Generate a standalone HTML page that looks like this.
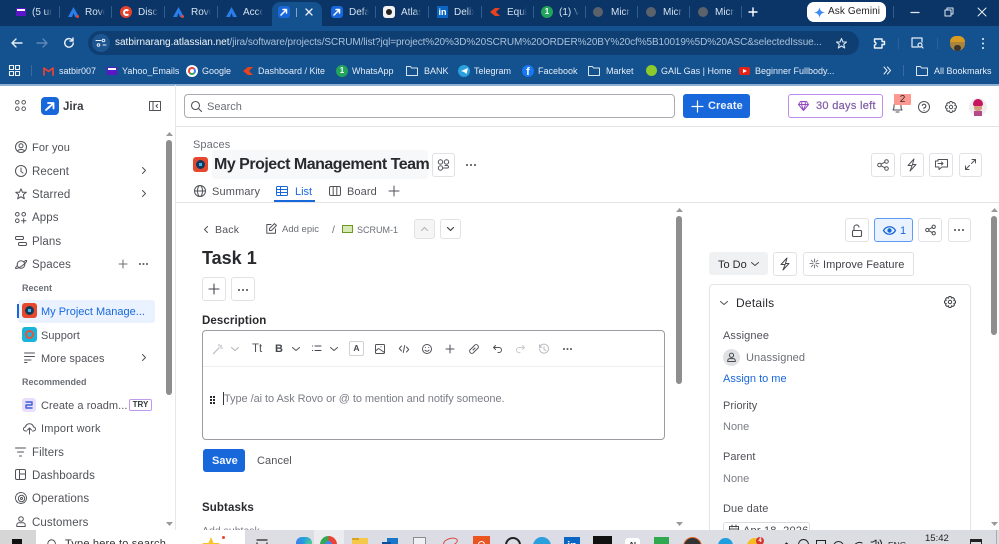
<!DOCTYPE html>
<html><head><meta charset="utf-8"><title>Jira</title>
<style>
html,body{margin:0;padding:0;width:999px;height:544px;overflow:hidden;background:#fff}
body{position:relative;font-family:"Liberation Sans",sans-serif;color:#505258}
.t{position:absolute;white-space:nowrap;line-height:16px;height:16px;margin-top:1px}
.a{position:absolute}
svg{position:absolute;overflow:visible;fill:none;stroke:currentColor;stroke-width:1.3;stroke-linecap:round;stroke-linejoin:round}
.tab{color:#d5e2f0;font-size:10px;width:20px;overflow:hidden;margin-top:0;-webkit-mask-image:linear-gradient(90deg,#000 65%,transparent);mask-image:linear-gradient(90deg,#000 65%,transparent)}
.sep{position:absolute;top:6px;width:1px;height:12px;background:#2d5f94}
.bm{color:#e6eef7;font-size:9px;top:62px}
.nav{font-size:11.5px;letter-spacing:.1px}
.sub{font-size:11px;letter-spacing:.05px}
.btn{position:absolute;box-sizing:border-box;border:1px solid #e0e2e6;border-radius:3px;background:#fff}
.lbl{font-size:11px;color:#505258}
</style></head><body>

<!-- browser chrome -->
<div class="a" style="left:0;top:0;width:999px;height:26px;background:#0b3566"></div>
<div class="a" style="left:0;top:26px;width:999px;height:58px;background:#13518f"></div>
<div class="a" style="left:272px;top:2px;width:50px;height:26px;background:#13518f;border-radius:8px 8px 0 0"></div>

<div class="a" style="left:16px;top:8px;width:10px;height:8px;background:#5b16c8"></div>
<div class="a" style="left:17px;top:9px;width:8px;height:2px;background:#fff"></div>
<div class="t tab" style="left:32px;top:5px">(5 ur</div><div class="sep" style="left:59px"></div>
<svg style="left:68px;top:7px" width="11" height="11" viewBox="0 0 11 11"><path d="M5.5 0L11 10H7L5.5 6L4 10H0Z" fill="#2b7de9" stroke="none"/><circle cx="9.5" cy="9.5" r="1.5" fill="#e5482d" stroke="none"/></svg>
<div class="t tab" style="left:85px;top:5px">Rovo</div><div class="sep" style="left:111px"></div>
<div class="a" style="left:120px;top:6px;width:12px;height:12px;border-radius:50%;background:#e5432d"></div>
<div class="a" style="left:123px;top:9px;width:3px;height:3px;border:2px solid #fff;border-right-color:transparent;border-radius:50%"></div>
<div class="t tab" style="left:138px;top:5px">Disco</div><div class="sep" style="left:164px"></div>
<svg style="left:173px;top:7px" width="11" height="11" viewBox="0 0 11 11"><path d="M5.5 0L11 10H7L5.5 6L4 10H0Z" fill="#2b7de9" stroke="none"/><circle cx="9.5" cy="9.5" r="1.5" fill="#e5482d" stroke="none"/></svg>
<div class="t tab" style="left:191px;top:5px">Rovo</div><div class="sep" style="left:217px"></div>
<svg style="left:226px;top:7px" width="11" height="11" viewBox="0 0 11 11"><path d="M5.5 0L11 10H7L5.5 6L4 10H0Z" fill="#2b7de9" stroke="none"/></svg>
<div class="t tab" style="left:243px;top:5px">Acce</div>

<div class="a" style="left:278px;top:6px;width:12px;height:12px;border-radius:3px;background:#1868db"></div>
<svg style="left:280px;top:8px;color:#fff" width="8" height="8" viewBox="0 0 8 8"><path d="M1 7L4 4M3 5L6 2M3 1.5H6.5V5" stroke-width="1.5"/></svg>
<div class="a" style="left:296px;top:8px;width:1px;height:9px;background:#7fa5cf"></div>
<svg style="left:306px;top:9px;color:#e8f0fa" width="6" height="6" viewBox="0 0 6 6"><path d="M0 0L6 6M6 0L0 6"/></svg>

<div class="a" style="left:331px;top:6px;width:12px;height:12px;border-radius:3px;background:#1868db"></div>
<svg style="left:333px;top:8px;color:#fff" width="8" height="8" viewBox="0 0 8 8"><path d="M1 7L4 4M3 5L6 2M3 1.5H6.5V5" stroke-width="1.5"/></svg>
<div class="t tab" style="left:349px;top:5px">Defa</div><div class="sep" style="left:375px"></div>
<div class="a" style="left:383px;top:6px;width:12px;height:12px;border-radius:3px;background:#f3f3f3"></div>
<div class="a" style="left:386px;top:9px;width:6px;height:6px;border-radius:50%;border:0;background:#222"></div>
<div class="t tab" style="left:401px;top:5px">Atlas</div><div class="sep" style="left:428px"></div>
<div class="a" style="left:437px;top:6px;width:11px;height:12px;background:#0a66c2;color:#fff;font:bold 9px/12px 'Liberation Sans',sans-serif;text-align:center">in</div>
<div class="t tab" style="left:454px;top:5px">Delix</div><div class="sep" style="left:481px"></div>
<svg style="left:490px;top:8px" width="10" height="8" viewBox="0 0 10 8"><path d="M5 0L0 4L5 8H10L6 4L10 0Z" fill="#e8421f" stroke="none"/></svg>
<div class="t tab" style="left:507px;top:5px">Equi</div><div class="sep" style="left:533px"></div>
<div class="a" style="left:541px;top:6px;width:12px;height:12px;border-radius:50%;background:#22a55b;color:#fff;font:bold 8px/12px 'Liberation Sans',sans-serif;text-align:center">1</div>
<div class="t tab" style="left:559px;top:5px">(1) V</div><div class="sep" style="left:585px"></div>
<div class="a" style="left:593px;top:7px;width:10px;height:10px;border-radius:50%;background:#5b626b"></div>
<div class="t tab" style="left:611px;top:5px">Micr</div><div class="sep" style="left:637px"></div>
<div class="a" style="left:646px;top:7px;width:10px;height:10px;border-radius:50%;background:#5b626b"></div>
<div class="t tab" style="left:663px;top:5px">Micr</div><div class="sep" style="left:689px"></div>
<div class="a" style="left:698px;top:7px;width:10px;height:10px;border-radius:50%;background:#5b626b"></div>
<div class="t tab" style="left:715px;top:5px">Micr</div><div class="sep" style="left:741px"></div>
<svg style="left:749px;top:8px;color:#fff" width="8" height="8" viewBox="0 0 8 8"><path d="M4 0V8M0 4H8" stroke-width="1.4"/></svg>

<div class="a" style="left:807px;top:2px;width:79px;height:20px;background:#fff;border-radius:7px"></div>
<svg style="left:814px;top:7px" width="11" height="11" viewBox="0 0 11 11"><path d="M5.5 0C6 3.5 7.500 5 11 5.500C7.500 6 6 7.500 5.500 11C5 7.500 3.500 6 0 5.500C3.500 5 5 3.500 5.500 0Z" fill="#3f8cf0" stroke="none"/></svg>
<div class="t" style="left:828px;top:3px;font-size:10px;color:#1f2023;letter-spacing:.1px">Ask Gemini</div>
<div class="sep" style="left:893px"></div>
<svg style="left:911px;top:12px;color:#dfe8f3" width="8" height="1" viewBox="0 0 8 1"><path d="M0 .5H8"/></svg>
<svg style="left:945px;top:8px;color:#dfe8f3" width="8" height="8" viewBox="0 0 8 8"><path d="M0 2H6V8H0ZM2 2V0H8V6H6" stroke-width="1"/></svg>
<svg style="left:978px;top:8px;color:#e8eef6" width="8" height="8" viewBox="0 0 8 8"><path d="M0 0L8 8M8 0L0 8" stroke-width="1"/></svg>

<!-- toolbar -->
<svg style="left:11px;top:38px;color:#e6eef7" width="11" height="10" viewBox="0 0 11 10"><path d="M11 5H1M5 1L1 5L5 9" stroke-width="1.4"/></svg>
<svg style="left:37px;top:38px;color:#5e87b5" width="11" height="10" viewBox="0 0 11 10"><path d="M0 5H10M6 1L10 5L6 9" stroke-width="1.4"/></svg>
<svg style="left:64px;top:38px;color:#e6eef7" width="10" height="10" viewBox="0 0 10 10"><path d="M9.300 5A4.300 4.300 0 1 1 8 1.800M9 0V3H6" stroke-width="1.4"/></svg>
<div class="a" style="left:88px;top:31px;width:771px;height:24px;border-radius:12px;background:#0f3f72"></div>
<div class="a" style="left:92px;top:34px;width:18px;height:18px;border-radius:50%;background:#1c558f"></div>
<svg style="left:96px;top:39px;color:#e6eef7" width="10" height="8" viewBox="0 0 10 8"><path d="M0 1.500H5M7 6H10" stroke-width="1"/><circle cx="7.500" cy="1.500" r="1.300" stroke-width="1"/><circle cx="2.500" cy="6" r="1.300" stroke-width="1"/></svg>
<div class="t" style="left:115px;top:34px;font-size:10px;color:#a9c0da;width:715px;overflow:hidden"><span style="color:#f3f7fb">satbirnarang.atlassian.net</span><span style="letter-spacing:-.1px">/jira/software/projects/SCRUM/list?jql=project%20%3D%20SCRUM%20ORDER%20BY%20cf%5B10019%5D%20ASC&amp;selectedIssue...</span></div>
<svg style="left:836px;top:38px;color:#d8e4f1" width="11" height="11" viewBox="0 0 11 11"><path d="M5.500 .5L7 4H10.500L7.700 6.300L8.700 10L5.500 8L2.300 10L3.300 6.300L.5 4H4Z" stroke-width="1.1"/></svg>
<svg style="left:873px;top:37px;color:#eef3f9" width="12" height="12" viewBox="0 0 12 12"><path d="M3 2H9V4.500H11.500V7.500H9V11H1.500V8A1.500 1.500 0 0 0 1.500 5V2Z" stroke-width="1.4"/></svg>
<div class="a" style="left:898px;top:38px;width:1px;height:11px;background:#2d6198"></div>
<svg style="left:911px;top:37px;color:#e6eef7" width="13" height="12" viewBox="0 0 13 12"><path d="M7 10H1V1H11V5" stroke-width="1.2"/><circle cx="9" cy="8" r="2" stroke-width="1.2"/><path d="M10.500 9.500L12 11" stroke-width="1.2"/></svg>
<div class="a" style="left:937px;top:38px;width:1px;height:11px;background:#2d6198"></div>
<div class="a" style="left:950px;top:36px;width:15px;height:15px;border-radius:50%;background:#a9843c"></div>
<div class="a" style="left:950px;top:36px;width:15px;height:6px;border-radius:8px 8px 0 0;background:#d89b22"></div>
<div class="a" style="left:954px;top:45px;width:7px;height:6px;border-radius:3px;background:#3c342c"></div>
<div class="a" style="left:982px;top:38px;width:2px;height:2px;border-radius:1px;background:#f0f4f9;box-shadow:0 4.500px 0 #f0f4f9,0 9px 0 #f0f4f9"></div>

<!-- bookmarks -->
<svg style="left:9px;top:65px;color:#eef3f9" width="11" height="11" viewBox="0 0 11 11"><path d="M.5 .5H4.500V4.500H.5ZM6.500 .5H10.500V4.500H6.500ZM.5 6.500H4.500V10.500H.5ZM6.500 6.500H10.500V10.500H6.500Z" stroke-width="1.1"/></svg>
<div class="a" style="left:31px;top:65px;width:1px;height:11px;background:#3a6a9e"></div>
<svg style="left:43px;top:67px" width="11" height="8" viewBox="0 0 11 8"><path d="M1 8V1L5.500 4.500L10 1V8" stroke="#e84335" stroke-width="1.700"/></svg>
<div class="t bm" style="left:59px">satbir007</div>
<div class="a" style="left:107px;top:67px;width:10px;height:8px;background:#5b16c8"></div><div class="a" style="left:108px;top:68px;width:8px;height:2px;background:#fff"></div>
<div class="t bm" style="left:122px">Yahoo_Emails</div>
<div class="a" style="left:186px;top:65px;width:12px;height:12px;border-radius:50%;background:#fff"></div>
<div class="a" style="left:188px;top:67px;width:4px;height:4px;border-radius:50%;border:2px solid #4285f4;border-left-color:#ea4335;border-bottom-color:#34a853;border-top-color:#ea4335"></div>
<div class="t bm" style="left:202px">Google</div>
<svg style="left:243px;top:67px" width="10" height="8" viewBox="0 0 10 8"><path d="M5 0L0 4L5 8H10L6 4L10 0Z" fill="#e8421f" stroke="none"/></svg>
<div class="t bm" style="left:258px">Dashboard / Kite</div>
<div class="a" style="left:336px;top:65px;width:12px;height:12px;border-radius:50%;background:#22a55b;color:#fff;font:bold 8px/12px 'Liberation Sans',sans-serif;text-align:center">1</div>
<div class="t bm" style="left:352px">WhatsApp</div>
<svg style="left:406px;top:66px;color:#d9e4f0" width="12" height="10" viewBox="0 0 12 10"><path d="M.5 9.500V.5H4.500L5.500 2H11.500V9.500Z" stroke-width="1"/></svg>
<div class="t bm" style="left:424px">BANK</div>
<div class="a" style="left:458px;top:65px;width:12px;height:12px;border-radius:50%;background:#2aa0dc"></div>
<svg style="left:461px;top:68px" width="7" height="6" viewBox="0 0 7 6"><path d="M0 3L7 0L5.500 6L3 4Z" fill="#fff" stroke="none"/></svg>
<div class="t bm" style="left:474px">Telegram</div>
<div class="a" style="left:522px;top:65px;width:12px;height:12px;border-radius:50%;background:#1877f2;color:#fff;font:bold 11px/14px 'Liberation Sans',sans-serif;text-align:center">f</div>
<div class="t bm" style="left:538px">Facebook</div>
<svg style="left:588px;top:66px;color:#d9e4f0" width="12" height="10" viewBox="0 0 12 10"><path d="M.5 9.500V.5H4.500L5.500 2H11.500V9.500Z" stroke-width="1"/></svg>
<div class="t bm" style="left:606px">Market</div>
<div class="a" style="left:646px;top:65px;width:11px;height:11px;border-radius:50%;background:#8ccb2b"></div>
<div class="t bm" style="left:661px">GAIL Gas | Home</div>
<div class="a" style="left:739px;top:67px;width:11px;height:8px;border-radius:2px;background:#e62117"></div>
<svg style="left:743px;top:69px" width="4" height="4" viewBox="0 0 4 4"><path d="M0 0L4 2L0 4Z" fill="#fff" stroke="none"/></svg>
<div class="t bm" style="left:755px">Beginner Fullbody...</div>
<svg style="left:883px;top:67px;color:#e6eef7" width="8" height="7" viewBox="0 0 8 7"><path d="M1 0L4 3.500L1 7M4.500 0L7.500 3.500L4.500 7" stroke-width="1"/></svg>
<div class="a" style="left:903px;top:65px;width:1px;height:11px;background:#3a6a9e"></div>
<svg style="left:916px;top:66px;color:#d9e4f0" width="12" height="10" viewBox="0 0 12 10"><path d="M.5 9.500V.5H4.500L5.500 2H11.500V9.500Z" stroke-width="1"/></svg>
<div class="t bm" style="left:934px">All Bookmarks</div>

<div class="a" style="left:0;top:84px;width:999px;height:1.500px;background:#8eaed2"></div>

<!-- dividers -->
<div class="a" style="left:175px;top:85px;width:1px;height:445px;background:#e6e7ea"></div>
<div class="a" style="left:176px;top:126px;width:823px;height:1px;background:#e3e4e7"></div>
<div class="a" style="left:176px;top:202px;width:823px;height:1px;background:#e3e4e7"></div>

<!-- sidebar header -->
<svg style="left:15px;top:100px;color:#5b5d62" width="11" height="11" viewBox="0 0 11 11"><circle cx="2.300" cy="2.300" r="1.800" stroke-width="1"/><circle cx="8.700" cy="2.300" r="1.800" stroke-width="1"/><circle cx="2.300" cy="8.700" r="1.800" stroke-width="1"/><circle cx="8.700" cy="8.700" r="1.800" stroke-width="1"/></svg>
<div class="a" style="left:41px;top:97px;width:18px;height:18px;border-radius:4px;background:#1868db"></div>
<svg style="left:45px;top:101px;color:#fff" width="10" height="10" viewBox="0 0 10 10"><path d="M1 9L4.500 5.500M3.500 7L7 3.500M3 2H8.500V7.500" stroke-width="1.800"/></svg>
<div class="t" style="left:63px;top:98px;font-size:11.500px;font-weight:bold;color:#3a3d42">Jira</div>
<svg style="left:149px;top:101px;color:#505258" width="12" height="10" viewBox="0 0 12 10"><path d="M.5 .5H11.500V9.500H.5ZM4 .5V9.500M8.500 3.500L7 5L8.500 6.500" stroke-width="1"/></svg>

<!-- sidebar scrollbar -->
<div class="a" style="left:166px;top:140px;width:6px;height:255px;border-radius:3px;background:#8e8e8e"></div>
<svg style="left:166px;top:132px" width="7" height="4" viewBox="0 0 7 4"><path d="M3.500 0L7 4H0Z" fill="#9a9a9a" stroke="none"/></svg>
<svg style="left:166px;top:522px" width="7" height="4" viewBox="0 0 7 4"><path d="M0 0H7L3.500 4Z" fill="#9a9a9a" stroke="none"/></svg>

<!-- sidebar nav -->
<svg style="left:15px;top:141px;color:#505258" width="12" height="12" viewBox="0 0 12 12"><circle cx="6" cy="6" r="5.500" stroke-width="1"/><circle cx="6" cy="4.800" r="2" stroke-width="1"/><path d="M2.500 10C3.500 8 8.500 8 9.500 10" stroke-width="1"/></svg>
<div class="t nav" style="left:32px;top:139px;font-size:11px">For you</div>
<svg style="left:15px;top:165px;color:#505258" width="12" height="12" viewBox="0 0 12 12"><circle cx="6" cy="6" r="5.500" stroke-width="1"/><path d="M6 3V6.500L8 8" stroke-width="1"/></svg>
<div class="t nav" style="left:32px;top:163px">Recent</div>
<svg style="left:142px;top:167px;color:#505258" width="4" height="7" viewBox="0 0 4 7"><path d="M.5 .5L3.500 3.500L.5 6.500" stroke-width="1"/></svg>
<svg style="left:15px;top:188px;color:#505258" width="12" height="12" viewBox="0 0 12 12"><path d="M6 .8L7.500 4.300H11.300L8.300 6.800L9.300 10.800L6 8.700L2.700 10.800L3.700 6.800L.7 4.300H4.500Z" stroke-width="1"/></svg>
<div class="t nav" style="left:32px;top:186px">Starred</div>
<svg style="left:142px;top:190px;color:#505258" width="4" height="7" viewBox="0 0 4 7"><path d="M.5 .5L3.500 3.500L.5 6.500" stroke-width="1"/></svg>
<svg style="left:15px;top:212px;color:#505258" width="11" height="11" viewBox="0 0 11 11"><circle cx="2.300" cy="2.300" r="1.800" stroke-width="1"/><circle cx="8.700" cy="2.300" r="1.800" stroke-width="1"/><circle cx="2.300" cy="8.700" r="1.800" stroke-width="1"/><path d="M8.700 6.500V11M6.500 8.700H11" stroke-width="1"/></svg>
<div class="t nav" style="left:32px;top:209px">Apps</div>
<svg style="left:15px;top:236px;color:#505258" width="12" height="10" viewBox="0 0 12 10"><rect x=".5" y=".5" width="8" height="3" rx="1.200" stroke-width="1"/><rect x="3.500" y="6.500" width="8" height="3" rx="1.200" stroke-width="1"/></svg>
<div class="t nav" style="left:32px;top:233px">Plans</div>
<svg style="left:15px;top:259px;color:#505258" width="12" height="11" viewBox="0 0 12 11"><circle cx="6" cy="5.500" r="3.800" stroke-width="1"/><path d="M9 2.500C11 1 12 1 11.500 2.300C11 4 5 9 1.500 9.500C0 9.800 .3 8.500 2 7" stroke-width="1"/></svg>
<div class="t nav" style="left:32px;top:256px">Spaces</div>
<svg style="left:119px;top:260px;color:#6b6e76" width="8" height="8" viewBox="0 0 8 8"><path d="M4 0V8M0 4H8" stroke-width="1"/></svg>
<div class="a" style="left:139px;top:263px;width:2px;height:2px;border-radius:1px;background:#505258;box-shadow:3.500px 0 0 #505258,7px 0 0 #505258"></div>
<div class="t" style="left:22px;top:279px;font-size:9px;font-weight:bold;color:#6b6e76">Recent</div>
<div class="a" style="left:18px;top:300px;width:137px;height:23px;border-radius:3px;background:#e9f2fe"></div>
<div class="a" style="left:17px;top:304px;width:2px;height:14px;background:#1868db"></div>
<div class="a" style="left:22px;top:303px;width:15px;height:15px;border-radius:3px;background:#e5482d"></div>
<div class="a" style="left:25px;top:306px;width:9px;height:9px;border-radius:50%;background:#12395b"></div>
<div class="a" style="left:28px;top:309px;width:3px;height:3px;background:#3fb7e8"></div>
<div class="t sub" style="left:41px;top:303px;color:#1868db;letter-spacing:0">My Project Manage...</div>
<div class="a" style="left:22px;top:327px;width:15px;height:15px;border-radius:3px;background:#19b5d8"></div>
<div class="a" style="left:25px;top:330px;width:5px;height:5px;border-radius:50%;border:2px solid #e8533f"></div>
<div class="t sub" style="left:41px;top:327px">Support</div>
<svg style="left:24px;top:352px;color:#505258" width="11" height="11" viewBox="0 0 11 11"><path d="M.5 1H10.500M.5 4.500H10.500M.5 8H7M.5 10.500H3" stroke-width="1"/></svg>
<div class="t sub" style="left:41px;top:350px">More spaces</div>
<svg style="left:142px;top:354px;color:#505258" width="4" height="7" viewBox="0 0 4 7"><path d="M.5 .5L3.500 3.500L.5 6.500" stroke-width="1"/></svg>
<div class="t" style="left:22px;top:373px;font-size:9px;font-weight:bold;color:#6b6e76">Recommended</div>
<div class="a" style="left:22px;top:398px;width:14px;height:14px;border-radius:3px;background:#e9dffc"></div>
<svg style="left:25px;top:401px" width="8" height="8" viewBox="0 0 8 8"><path d="M1 1H7V4H1V7H7" stroke="#3d5ed6" stroke-width="1.400"/></svg>
<div class="t sub" style="left:41px;top:397px">Create a roadm...</div>
<div class="a" style="left:129px;top:399px;width:23px;height:12px;box-sizing:border-box;border:1px solid #bf9bf0;border-radius:2px;font:bold 8px/10px 'Liberation Sans',sans-serif;text-align:center;color:#33363b">TRY</div>
<svg style="left:23px;top:423px;color:#505258" width="13" height="11" viewBox="0 0 13 11"><path d="M3.500 8H2.500A2 2 0 0 1 2.500 4C3 2 4.500 .8 6.500 .8C8.500 .8 10 2 10.500 4A2 2 0 0 1 10.500 8H9.500M6.500 11V5M4.500 7L6.500 5L8.500 7" stroke-width="1"/></svg>
<div class="t sub" style="left:41px;top:420px;letter-spacing:.2px">Import work</div>
<svg style="left:15px;top:447px;color:#505258" width="11" height="10" viewBox="0 0 11 10"><path d="M.5 1H10.500M2.500 5H8.500M4.500 9H6.500" stroke-width="1"/></svg>
<div class="t nav" style="left:32px;top:444px">Filters</div>
<svg style="left:15px;top:469px;color:#505258" width="11" height="11" viewBox="0 0 11 11"><rect x=".5" y=".5" width="10" height="10" rx="1.500" stroke-width="1"/><path d="M4.500 .5V10.500M4.500 5H10.500" stroke-width="1"/></svg>
<div class="t nav" style="left:32px;top:467px">Dashboards</div>
<svg style="left:15px;top:492px;color:#505258" width="12" height="12" viewBox="0 0 12 12"><circle cx="6" cy="6" r="5.500" stroke-width="1" stroke-dasharray="3 1"/><circle cx="6.500" cy="6.500" r="3.200" stroke-width="1"/><circle cx="6.500" cy="6.500" r="1" stroke-width="1"/></svg>
<div class="t nav" style="left:32px;top:490px">Operations</div>
<svg style="left:16px;top:516px;color:#505258" width="10" height="11" viewBox="0 0 10 11"><circle cx="5" cy="3" r="2.300" stroke-width="1"/><path d="M.8 10.500V9C.8 7.500 2 6.800 3 6.800H7C8 6.800 9.200 7.500 9.200 9V10.500Z" stroke-width="1"/></svg>
<div class="t nav" style="left:32px;top:514px">Customers</div>

<!-- top bar -->
<div class="a" style="left:184px;top:94px;width:491px;height:24px;box-sizing:border-box;border:1px solid #a9abb0;border-radius:4px;background:#fff"></div>
<svg style="left:191px;top:101px;color:#505258" width="11" height="11" viewBox="0 0 11 11"><circle cx="4.500" cy="4.500" r="4" stroke-width="1.100"/><path d="M7.500 7.500L10.500 10.500" stroke-width="1.100"/></svg>
<div class="t" style="left:207px;top:98px;font-size:11px;color:#6b6e76">Search</div>
<div class="a" style="left:683px;top:94px;width:67px;height:24px;border-radius:3px;background:#1868db"></div>
<svg style="left:692px;top:101px;color:#fff" width="11" height="11" viewBox="0 0 11 11"><path d="M5.500 0V11M0 5.500H11" stroke-width="1.200"/></svg>
<div class="t" style="left:708px;top:97px;font-size:11px;font-weight:bold;color:#eaf2fd;letter-spacing:.1px">Create</div>
<div class="a" style="left:788px;top:94px;width:95px;height:24px;box-sizing:border-box;border:1.500px solid #bf8cf0;border-radius:3px"></div>
<svg style="left:798px;top:101px" width="11" height="10" viewBox="0 0 11 10"><path d="M2.500 .5H8.500L10.500 3.500L5.500 9.500L.5 3.500ZM.5 3.500H10.500M4 .5L3.500 3.500L5.500 9.500L7.500 3.500L7 .5" stroke="#964ac0" stroke-width="1"/></svg>
<div class="t" style="left:816px;top:97px;font-size:11px;color:#7d5ba6;letter-spacing:.3px;-webkit-text-stroke:.2px #7d5ba6">30 days left</div>
<svg style="left:892px;top:101px;color:#505258" width="11" height="12" viewBox="0 0 11 12"><path d="M1 9C2 8 2 7 2 5C2 2.500 3.500 1 5.500 1S9 2.500 9 5C9 7 9 8 10 9ZM4 11H7" stroke-width="1.100"/></svg>
<div class="a" style="left:894px;top:94px;width:17px;height:11px;border-radius:1px;background:#fd9891;color:#292a2e;font-size:10px;line-height:11px;text-align:center">2</div>
<svg style="left:918px;top:101px;color:#505258" width="12" height="12" viewBox="0 0 12 12"><circle cx="6" cy="6" r="5.500" stroke-width="1"/><path d="M4.300 4.500A1.800 1.800 0 1 1 6 6.800V7.500M6 9.300V9.400" stroke-width="1.100"/></svg>
<svg style="left:945px;top:101px;color:#505258" width="12" height="12" viewBox="0 0 12 12"><path d="M5 .5H7L7.400 2.100L8.900 1.500L10.500 3L9.800 4.500L11.500 5V7L9.800 7.500L10.500 9L9 10.500L7.500 9.800L7 11.500H5L4.500 9.800L3 10.500L1.500 9L2.200 7.500L.5 7V5L2.200 4.500L1.500 3L3 1.500L4.500 2.200Z" stroke-width="1"/><circle cx="6" cy="6" r="1.700" stroke-width="1"/></svg>
<div class="a" style="left:969px;top:98px;width:18px;height:18px;border-radius:50%;background:#f0eded"></div>
<div class="a" style="left:973px;top:99px;width:10px;height:7px;border-radius:5px 5px 2px 2px;background:#c9145f"></div>
<div class="a" style="left:974px;top:106px;width:8px;height:5px;border-radius:0 0 3px 3px;background:#d2a07e"></div>
<div class="a" style="left:974px;top:111px;width:8px;height:5px;background:#b44a8a"></div>

<!-- project header -->
<div class="t" style="left:193px;top:136px;font-size:11px;color:#6b6e76;letter-spacing:.1px">Spaces</div>
<div class="a" style="left:193px;top:157px;width:15px;height:15px;border-radius:3px;background:#e5482d"></div>
<div class="a" style="left:196px;top:160px;width:9px;height:9px;border-radius:50%;background:#12395b"></div>
<div class="a" style="left:199px;top:163px;width:3px;height:3px;background:#3fb7e8"></div>
<div class="a" style="left:212px;top:150px;width:216px;height:29px;background:#f7f8f9;border-radius:3px"></div>
<div class="t" style="left:214px;top:156px;font-size:16px;font-weight:bold;color:#292a2e;letter-spacing:-.5px">My Project Management Team</div>
<div class="btn" style="left:432px;top:153px;width:23px;height:24px"></div>
<svg style="left:437px;top:159px;color:#505258" width="13" height="12" viewBox="0 0 13 12"><circle cx="3.500" cy="3" r="2.200" stroke-width="1"/><circle cx="9.500" cy="3" r="2.200" stroke-width="1"/><circle cx="3.500" cy="9" r="2.200" stroke-width="1"/><path d="M6 9H11A1.500 1.500 0 0 0 9.500 6.500H8" stroke-width="1"/></svg>
<div class="a" style="left:466px;top:164px;width:2px;height:2px;border-radius:1px;background:#44474d;box-shadow:4px 0 0 #44474d,8px 0 0 #44474d"></div>

<div class="btn" style="left:871px;top:153px;width:24px;height:24px"></div>
<svg style="left:877px;top:159px;color:#505258" width="12" height="12" viewBox="0 0 12 12"><circle cx="2.500" cy="6" r="1.800" stroke-width="1"/><circle cx="9.500" cy="2.500" r="1.800" stroke-width="1"/><circle cx="9.500" cy="9.500" r="1.800" stroke-width="1"/><path d="M4 5.200L8 3.200M4 6.800L8 8.800" stroke-width="1"/></svg>
<div class="btn" style="left:900px;top:153px;width:24px;height:24px"></div>
<svg style="left:907px;top:159px;color:#505258" width="10" height="12" viewBox="0 0 10 12"><path d="M7 0L1 6.500H4.500M9 5.500H5.500L3 12L9 5.500M7 0L5.500 5.500" stroke-width="1"/></svg>
<div class="btn" style="left:929px;top:153px;width:24px;height:24px"></div>
<svg style="left:935px;top:159px;color:#505258" width="13" height="12" viewBox="0 0 13 12"><path d="M3 2V.5H12.500V8H7L4 10.500V8H.5V2ZM3 4.500H8M6.500 3L8 4.500L6.500 6" stroke-width="1"/></svg>
<div class="btn" style="left:959px;top:153px;width:23px;height:24px"></div>
<svg style="left:965px;top:159px;color:#505258" width="11" height="11" viewBox="0 0 11 11"><path d="M7 .5H10.500V4M10.500 .5L6.500 4.500M4 10.500H.5V7M.5 10.500L4.500 6.500" stroke-width="1"/></svg>

<!-- tabs -->
<svg style="left:194px;top:185px;color:#505258" width="12" height="12" viewBox="0 0 12 12"><circle cx="6" cy="6" r="5.500" stroke-width="1"/><ellipse cx="6" cy="6" rx="2.500" ry="5.500" stroke-width="1"/><path d="M.5 6H11.500" stroke-width="1"/></svg>
<div class="t" style="left:212px;top:183px;font-size:11px;color:#505258;letter-spacing:.15px">Summary</div>
<svg style="left:276px;top:186px;color:#1868db" width="12" height="10" viewBox="0 0 12 10"><rect x=".5" y=".5" width="11" height="9" rx="1" stroke-width="1"/><path d="M.5 3.500H11.500M.5 6.500H11.500M4.500 .5V9.500" stroke-width="1"/></svg>
<div class="t" style="left:295px;top:183px;font-size:11px;color:#1868db">List</div>
<div class="a" style="left:274px;top:200px;width:41px;height:2px;background:#1868db"></div>
<svg style="left:329px;top:186px;color:#505258" width="12" height="10" viewBox="0 0 12 10"><rect x=".5" y=".5" width="11" height="9" rx="1.500" stroke-width="1"/><path d="M4.200 .5V9.500M7.800 .5V9.500" stroke-width="1"/></svg>
<div class="t" style="left:347px;top:183px;font-size:11px;color:#505258;letter-spacing:.1px">Board</div>
<svg style="left:389px;top:186px;color:#505258" width="10" height="10" viewBox="0 0 10 10"><path d="M5 0V10M0 5H10" stroke-width="1"/></svg>

<!-- main content -->
<svg style="left:204px;top:226px;color:#505258" width="4" height="7" viewBox="0 0 4 7"><path d="M3.500 .5L.5 3.500L3.500 6.500" stroke-width="1"/></svg>
<div class="t" style="left:215px;top:221px;font-size:10.500px;color:#505258;letter-spacing:.2px">Back</div>
<svg style="left:266px;top:223px;color:#505258" width="11" height="11" viewBox="0 0 11 11"><path d="M5 1.500H.8V10.200H9.500V6M3.500 7.500V5.500L8.500 .6L10.400 2.500L5.500 7.500Z" stroke-width="1"/></svg>
<div class="t" style="left:282px;top:221px;font-size:9.500px;color:#6b6e76">Add epic</div>
<div class="t" style="left:332px;top:221px;font-size:10.500px;color:#6b6e76">/</div>
<div class="a" style="left:342px;top:225px;width:11px;height:8px;box-sizing:border-box;border:1.500px solid #6a9a23;background:#d6e8b3"></div>
<div class="t" style="left:357px;top:221px;font-size:9px;color:#6b6e76">SCRUM-1</div>
<div class="btn" style="left:414px;top:219px;width:21px;height:20px;background:#f5f5f6"></div>
<svg style="left:421px;top:227px;color:#b0b2b7" width="7" height="4" viewBox="0 0 7 4"><path d="M.5 3.500L3.500 .5L6.500 3.500" stroke-width="1"/></svg>
<div class="btn" style="left:440px;top:219px;width:21px;height:20px"></div>
<svg style="left:447px;top:227px;color:#3f4147" width="7" height="4" viewBox="0 0 7 4"><path d="M.5 .5L3.500 3.500L6.500 .5" stroke-width="1.200"/></svg>
<div class="t" style="left:202px;top:249px;font-size:18px;font-weight:bold;color:#292a2e">Task 1</div>
<div class="btn" style="left:202px;top:277px;width:24px;height:24px"></div>
<svg style="left:209px;top:284px;color:#44474d" width="10" height="10" viewBox="0 0 10 10"><path d="M5 0V10M0 5H10" stroke-width="1.100"/></svg>
<div class="btn" style="left:231px;top:277px;width:24px;height:24px"></div>
<div class="a" style="left:238px;top:289px;width:2px;height:2px;border-radius:1px;background:#44474d;box-shadow:4px 0 0 #44474d,8px 0 0 #44474d"></div>

<div class="t" style="left:202px;top:312px;font-size:11.500px;font-weight:bold;color:#292a2e;letter-spacing:.1px">Description</div>
<div class="a" style="left:202px;top:330px;width:463px;height:110px;box-sizing:border-box;border:1px solid #9a9ca2;border-radius:4px"></div>
<div class="a" style="left:203px;top:366px;width:461px;height:1px;background:#eeeff1"></div>
<!-- editor toolbar -->
<svg style="left:213px;top:344px;color:#c1c3c8" width="10" height="10" viewBox="0 0 10 10"><path d="M.5 9.500L6 4M6 .5V2M9.500 4H8M8.500 1.500L7.500 2.500" stroke-width="1.300"/></svg>
<svg style="left:231px;top:347px;color:#b0b2b7" width="8" height="4" viewBox="0 0 8 4"><path d="M.5 .5L4 3.500L7.500 .5" stroke-width="1"/></svg>
<div class="t" style="left:252px;top:340px;font-size:11.500px;color:#505258">Tt</div>
<div class="t" style="left:275px;top:340px;font-size:11px;font-weight:bold;color:#44474d">B</div>
<svg style="left:292px;top:347px;color:#505258" width="8" height="4" viewBox="0 0 8 4"><path d="M.5 .5L4 3.500L7.500 .5" stroke-width="1"/></svg>
<svg style="left:312px;top:345px;color:#44474d" width="9" height="7" viewBox="0 0 9 7"><path d="M3 1H9M3 5.500H9M.5 1H.6M.5 5.500H.6" stroke-width="1.100"/></svg>
<svg style="left:330px;top:347px;color:#505258" width="8" height="4" viewBox="0 0 8 4"><path d="M.5 .5L4 3.500L7.500 .5" stroke-width="1"/></svg>
<div class="a" style="left:349px;top:341px;width:15px;height:15px;box-sizing:border-box;border:1px solid #cfd1d5;border-radius:2px;font:bold 8.500px/13px 'Liberation Sans',sans-serif;text-align:center;color:#44474d">A</div>
<svg style="left:375px;top:344px;color:#505258" width="10" height="10" viewBox="0 0 10 10"><rect x=".5" y=".5" width="9" height="9" rx="1" stroke-width="1"/><path d="M.5 7L3.500 4.500L9.500 8.500M6 2.800H6.100" stroke-width="1"/></svg>
<svg style="left:399px;top:345px;color:#505258" width="10" height="8" viewBox="0 0 10 8"><path d="M2.500 1L.3 3.500L2.500 6M7.500 2L9.700 4.500L7.500 7M5.700 .5L4.300 7.500" stroke-width="1"/></svg>
<svg style="left:422px;top:344px;color:#505258" width="10" height="10" viewBox="0 0 10 10"><circle cx="5" cy="5" r="4.500" stroke-width="1"/><path d="M3 6.200C4 7.500 6 7.500 7 6.200M3.300 3.500H3.400M6.700 3.500H6.800" stroke-width="1"/></svg>
<svg style="left:446px;top:345px;color:#505258" width="8" height="8" viewBox="0 0 8 8"><path d="M4 0V8M0 4H8" stroke-width="1"/></svg>
<svg style="left:469px;top:344px;color:#505258" width="10" height="10" viewBox="0 0 10 10"><path d="M4 6L6 4M3.500 3.500L5.500 1.300A2 2 0 0 1 8.700 4.500L6.500 6.500M6.500 6.500L4.500 8.700A2 2 0 0 1 1.300 5.500L3.500 3.500" stroke-width="1"/></svg>
<svg style="left:493px;top:345px;color:#505258" width="9" height="8" viewBox="0 0 9 8"><path d="M2.500 .5L.5 2.500L2.500 4.500M.5 2.500H6A2.500 2.500 0 0 1 6 7.500H5" stroke-width="1"/></svg>
<svg style="left:516px;top:345px;color:#c8cace" width="9" height="8" viewBox="0 0 9 8"><path d="M6.500 .5L8.500 2.500L6.500 4.500M8.500 2.500H3A2.500 2.500 0 0 0 3 7.500H4" stroke-width="1"/></svg>
<svg style="left:539px;top:344px;color:#b8babf" width="10" height="10" viewBox="0 0 10 10"><path d="M.8 3A4.500 4.500 0 1 1 .5 5M.5 .8V3.200H2.800M5 2.800V5.300L6.800 6.500" stroke-width="1"/></svg>
<div class="a" style="left:563px;top:348px;width:2px;height:2px;border-radius:1px;background:#505258;box-shadow:3.500px 0 0 #505258,7px 0 0 #505258"></div>

<div class="a" style="left:210px;top:396px;width:2px;height:2px;background:#292a2e;box-shadow:3px 0 0 #292a2e,0 3px 0 #292a2e,3px 3px 0 #292a2e,0 6px 0 #292a2e,3px 6px 0 #292a2e"></div>
<div class="a" style="left:223px;top:392px;width:1px;height:13px;background:#33363b"></div>
<div class="t" style="left:224px;top:390px;font-size:11px;color:#7b7e86;letter-spacing:-.06px">Type /ai to Ask Rovo or @ to mention and notify someone.</div>

<div class="a" style="left:203px;top:449px;width:42px;height:23px;border-radius:3px;background:#1868db"></div>
<div class="t" style="left:212px;top:452px;font-size:11px;font-weight:bold;color:#f0f6fe">Save</div>
<div class="t" style="left:257px;top:452px;font-size:11px;color:#505258;letter-spacing:.1px">Cancel</div>
<div class="t" style="left:202px;top:499px;font-size:11.500px;font-weight:bold;color:#292a2e;letter-spacing:.1px">Subtasks</div>
<div class="t" style="left:202px;top:522px;font-size:10.500px;color:#7b7e86">Add subtask</div>

<!-- main scrollbar -->
<div class="a" style="left:676px;top:216px;width:6px;height:168px;border-radius:3px;background:#8e8e8e"></div>
<svg style="left:676px;top:208px" width="7" height="4" viewBox="0 0 7 4"><path d="M3.500 0L7 4H0Z" fill="#9a9a9a" stroke="none"/></svg>
<svg style="left:676px;top:522px" width="7" height="4" viewBox="0 0 7 4"><path d="M0 0H7L3.500 4Z" fill="#9a9a9a" stroke="none"/></svg>

<!-- right panel -->
<div class="btn" style="left:845px;top:218px;width:24px;height:24px"></div>
<svg style="left:852px;top:225px;color:#505258" width="10" height="12" viewBox="0 0 10 12"><rect x=".5" y="5.500" width="9" height="6" rx="1" stroke-width="1.100"/><path d="M2 5.500V3A2.500 2.500 0 0 1 7 2" stroke-width="1.100"/></svg>
<div class="a" style="left:874px;top:218px;width:39px;height:24px;box-sizing:border-box;border:1px solid #5d9cf5;border-radius:3px;background:#e9f2fe"></div>
<svg style="left:883px;top:226px;color:#1868db" width="13" height="9" viewBox="0 0 13 9"><path d="M.5 4.500C3.500 -.5 9.500 -.5 12.500 4.500C9.500 9.500 3.500 9.500 .5 4.500Z" stroke-width="1.300"/><circle cx="6.500" cy="4.500" r="2.200" fill="#1868db" stroke="none"/></svg>
<div class="t" style="left:900px;top:222px;font-size:11px;color:#1868db">1</div>
<div class="btn" style="left:918px;top:218px;width:24px;height:24px"></div>
<svg style="left:925px;top:224px;color:#505258" width="11" height="12" viewBox="0 0 12 12"><circle cx="2.500" cy="6" r="1.800" stroke-width="1.100"/><circle cx="9.500" cy="2.500" r="1.800" stroke-width="1.100"/><circle cx="9.500" cy="9.500" r="1.800" stroke-width="1.100"/><path d="M4 5.200L8 3.200M4 6.800L8 8.800" stroke-width="1.100"/></svg>
<div class="btn" style="left:948px;top:218px;width:23px;height:24px"></div>
<div class="a" style="left:954px;top:229px;width:2px;height:2px;border-radius:1px;background:#44474d;box-shadow:4px 0 0 #44474d,8px 0 0 #44474d"></div>

<div class="a" style="left:709px;top:252px;width:59px;height:23px;border-radius:3px;background:#f0f1f2"></div>
<div class="t" style="left:718px;top:256px;font-size:11px;color:#292a2e">To Do</div>
<svg style="left:751px;top:262px;color:#44474d" width="8" height="4" viewBox="0 0 8 4"><path d="M.5 .5L4 3.500L7.500 .5" stroke-width="1"/></svg>
<div class="btn" style="left:773px;top:252px;width:24px;height:24px"></div>
<svg style="left:780px;top:258px;color:#44474d" width="10" height="12" viewBox="0 0 10 12"><path d="M7 0L1 6.500H4.500M9 5.500H5.500L3 12L9 5.500M7 0L5.500 5.500" stroke-width="1"/></svg>
<div class="btn" style="left:803px;top:252px;width:111px;height:24px"></div>
<svg style="left:810px;top:259px;color:#7b7e86" width="9" height="9" viewBox="0 0 9 9"><path d="M4.500 0V3M4.500 6V9M0 4.500H3M6 4.500H9M1.200 1.200L3 3M6 6L7.800 7.800M7.800 1.200L6 3M3 6L1.200 7.800" stroke-width="1"/></svg>
<div class="t" style="left:823px;top:256px;font-size:11px;color:#3f4147;letter-spacing:.05px">Improve Feature</div>

<div class="a" style="left:709px;top:284px;width:262px;height:270px;box-sizing:border-box;border:1px solid #e3e4e7;border-radius:4px"></div>
<svg style="left:720px;top:301px;color:#505258" width="8" height="4" viewBox="0 0 8 4"><path d="M.5 .5L4 3.500L7.500 .5" stroke-width="1"/></svg>
<div class="t" style="left:736px;top:294px;font-size:12px;color:#292a2e;letter-spacing:.25px">Details</div>
<svg style="left:944px;top:296px;color:#3f4147" width="12" height="12" viewBox="0 0 12 12"><path d="M5 .5H7L7.400 2.100L8.900 1.500L10.500 3L9.800 4.500L11.500 5V7L9.800 7.500L10.500 9L9 10.500L7.500 9.800L7 11.500H5L4.500 9.800L3 10.500L1.500 9L2.200 7.500L.5 7V5L2.200 4.500L1.500 3L3 1.500L4.500 2.200Z" stroke-width="1"/><circle cx="6" cy="6" r="1.700" stroke-width="1"/></svg>

<div class="t lbl" style="left:723px;top:327px;letter-spacing:.1px">Assignee</div>
<div class="a" style="left:723px;top:349px;width:17px;height:17px;border-radius:50%;background:#dfe1e4"></div>
<svg style="left:727px;top:352px;color:#44474d" width="9" height="11" viewBox="0 0 10 11"><circle cx="5" cy="3" r="2.300" stroke-width="1.100"/><path d="M.8 10V9C.8 7.500 2 6.800 3 6.800H7C8 6.800 9.200 7.500 9.200 9V10Z" stroke-width="1.100"/></svg>
<div class="t lbl" style="left:746px;top:349px;color:#6b6e76;letter-spacing:.1px">Unassigned</div>
<div class="t" style="left:723px;top:370px;font-size:11px;color:#1868db">Assign to me</div>
<div class="t lbl" style="left:723px;top:397px">Priority</div>
<div class="t lbl" style="left:723px;top:418px;color:#7b7e86">None</div>
<div class="t lbl" style="left:723px;top:448px">Parent</div>
<div class="t lbl" style="left:723px;top:470px;color:#7b7e86">None</div>
<div class="t lbl" style="left:723px;top:500px;letter-spacing:.1px">Due date</div>
<div class="a" style="left:723px;top:522px;width:87px;height:20px;box-sizing:border-box;border:1px solid #d9dadd;border-radius:3px"></div>
<svg style="left:729px;top:525px;color:#44474d" width="10" height="10" viewBox="0 0 10 10"><rect x=".5" y="1.500" width="9" height="8" stroke-width="1"/><path d="M.5 4H9.500M3 0V2M7 0V2" stroke-width="1"/></svg>
<div class="t" style="left:743px;top:522px;font-size:11px;color:#44474d;letter-spacing:.2px">Apr 18, 2026</div>

<!-- right scrollbar -->
<div class="a" style="left:991px;top:216px;width:6px;height:119px;border-radius:3px;background:#8e8e8e"></div>
<svg style="left:991px;top:208px" width="7" height="4" viewBox="0 0 7 4"><path d="M3.500 0L7 4H0Z" fill="#9a9a9a" stroke="none"/></svg>
<svg style="left:991px;top:522px" width="7" height="4" viewBox="0 0 7 4"><path d="M0 0H7L3.500 4Z" fill="#9a9a9a" stroke="none"/></svg>

<!-- taskbar -->
<div class="a" style="left:0;top:530px;width:999px;height:14px;overflow:hidden;background:linear-gradient(90deg,#dcdcdf 0,#dddde3 25%,#dbdce6 50%,#dcdee4 75%,#d9dce0 100%)">
  <div class="a" style="left:0;top:0;width:36px;height:14px;background:#d6d6d6"></div>
  <div class="a" style="left:12px;top:9px;width:10px;height:10px;background:#111"></div>
  <div class="a" style="left:36px;top:0;width:209px;height:14px;background:#fff"></div>
  <svg style="left:47px;top:9px;color:#333" width="10" height="10" viewBox="0 0 12 12"><circle cx="5.500" cy="5.500" r="4.500" stroke-width="1"/></svg>
  <div class="t" style="left:65px;top:5px;font-size:11px;color:#333;letter-spacing:.2px">Type here to search</div>
  <svg style="left:202px;top:7px" width="18" height="14" viewBox="0 0 18 14"><path d="M9 0L11.500 6H18L12.500 10L14 16H4L5.500 10L0 6H6.500Z" fill="#f7c325" stroke="none"/></svg>
  <div class="a" style="left:222px;top:6px;width:3px;height:3px;border-radius:50%;background:#e5482d"></div>
  <svg style="left:256px;top:9px;color:#222" width="12" height="10" viewBox="0 0 12 10"><path d="M1 1H11M1 4V12H11V4" stroke-width="1.200"/></svg>
  <div class="a" style="left:296px;top:7px;width:16px;height:16px;border-radius:6px;background:conic-gradient(#25a0e0,#4fd08a,#c34fd0,#3b7de9,#25a0e0)"></div>
  <div class="a" style="left:314px;top:0;width:30px;height:14px;background:#ececef"></div>
  <div class="a" style="left:320px;top:6px;width:17px;height:17px;border-radius:50%;background:conic-gradient(#ea4335 0 33%,#fbbc05 33% 66%,#34a853 66% 100%)"></div>
  <div class="a" style="left:325px;top:11px;width:7px;height:7px;border-radius:50%;background:#4285f4"></div>
  <div class="a" style="left:352px;top:8px;width:16px;height:12px;background:#f6c84a"></div>
  <div class="a" style="left:352px;top:8px;width:7px;height:2px;background:#d9a21f"></div>
  <div class="a" style="left:387px;top:8px;width:11px;height:12px;background:#1a76c9"></div>
  <div class="a" style="left:382px;top:12px;width:9px;height:9px;background:#0a4f9e"></div>
  <div class="a" style="left:413px;top:7px;width:13px;height:14px;background:#eef0f3;border:1px solid #8c8c8c;box-sizing:border-box"></div>
  <div class="a" style="left:443px;top:8px;width:15px;height:8px;border-radius:50%;border:1.500px solid #d8493f;box-sizing:border-box;transform:rotate(-15deg)"></div>
  <div class="a" style="left:473px;top:6px;width:17px;height:17px;background:#e95420"></div>
  <div class="a" style="left:478px;top:11px;width:7px;height:7px;border-radius:50%;border:1.500px solid #fff;box-sizing:border-box"></div>
  <div class="a" style="left:505px;top:7px;width:16px;height:16px;border-radius:50%;border:2px solid #222;box-sizing:border-box"></div>
  <div class="a" style="left:533px;top:7px;width:18px;height:18px;border-radius:50%;background:#2aa0dc"></div>
  <div class="a" style="left:564px;top:7px;width:16px;height:16px;background:#0a66c2;color:#fff;font:bold 11px/18px 'Liberation Sans',sans-serif;text-align:center">in</div>
  <div class="a" style="left:593px;top:6px;width:19px;height:18px;background:#111"></div>
  <div class="a" style="left:625px;top:8px;width:15px;height:15px;border-radius:3px;background:#fff;color:#111;font:bold 7px/15px 'Liberation Sans',sans-serif;text-align:center">AI</div>
  <div class="a" style="left:654px;top:7px;width:15px;height:15px;background:#2fa84f"></div>
  <div class="a" style="left:683px;top:7px;width:19px;height:19px;border-radius:50%;background:#333;border:1.500px solid #e5692d;box-sizing:border-box"></div>
  <div class="a" style="left:718px;top:8px;width:15px;height:15px;border-radius:50%;background:#1f9ee0"></div>
  <div class="a" style="left:747px;top:8px;width:16px;height:16px;border-radius:50%;background:#f7bc1f"></div>
  <div class="a" style="left:756px;top:7px;width:8px;height:8px;border-radius:50%;background:#d8342b;color:#fff;font:bold 6px/8px 'Liberation Sans',sans-serif;text-align:center">4</div>
  <svg style="left:783px;top:12px;color:#222" width="7" height="5" viewBox="0 0 7 5"><path d="M.5 4L3.500 1L6.500 4" stroke-width="1.100"/></svg>
  <div class="a" style="left:798px;top:9px;width:11px;height:11px;box-sizing:border-box;border:1.500px solid #222;border-radius:50%"></div>
  <div class="a" style="left:816px;top:10px;width:10px;height:9px;box-sizing:border-box;border:1.500px solid #222"></div>
  <div class="a" style="left:833px;top:11px;width:11px;height:11px;box-sizing:border-box;border:1px solid #333;border-radius:50%"></div>
  <svg style="left:853px;top:11px;color:#222" width="10" height="9" viewBox="0 0 10 9"><path d="M1 5A6 6 0 0 1 9 2M3 8A4 4 0 0 1 7 5" stroke-width="1"/></svg>
  <svg style="left:871px;top:9px;color:#222" width="12" height="9" viewBox="0 0 12 9"><path d="M0 3H2L5 1V9M7 3A3 3 0 0 1 7 7M9 1A6 6 0 0 1 9 9" stroke-width="1"/></svg>
  <div class="t" style="left:888px;top:6px;font-size:8.500px;color:#222">ENG</div>
  <div class="t" style="left:925px;top:0;font-size:9.500px;color:#222">15:42</div>
  <div class="a" style="left:970px;top:9px;width:12px;height:12px;box-sizing:border-box;border:1.500px solid #222;border-top-width:3px"></div>
  <div class="a" style="left:996px;top:0;width:1px;height:14px;background:#a9abb0"></div>
</div>
</body></html>
